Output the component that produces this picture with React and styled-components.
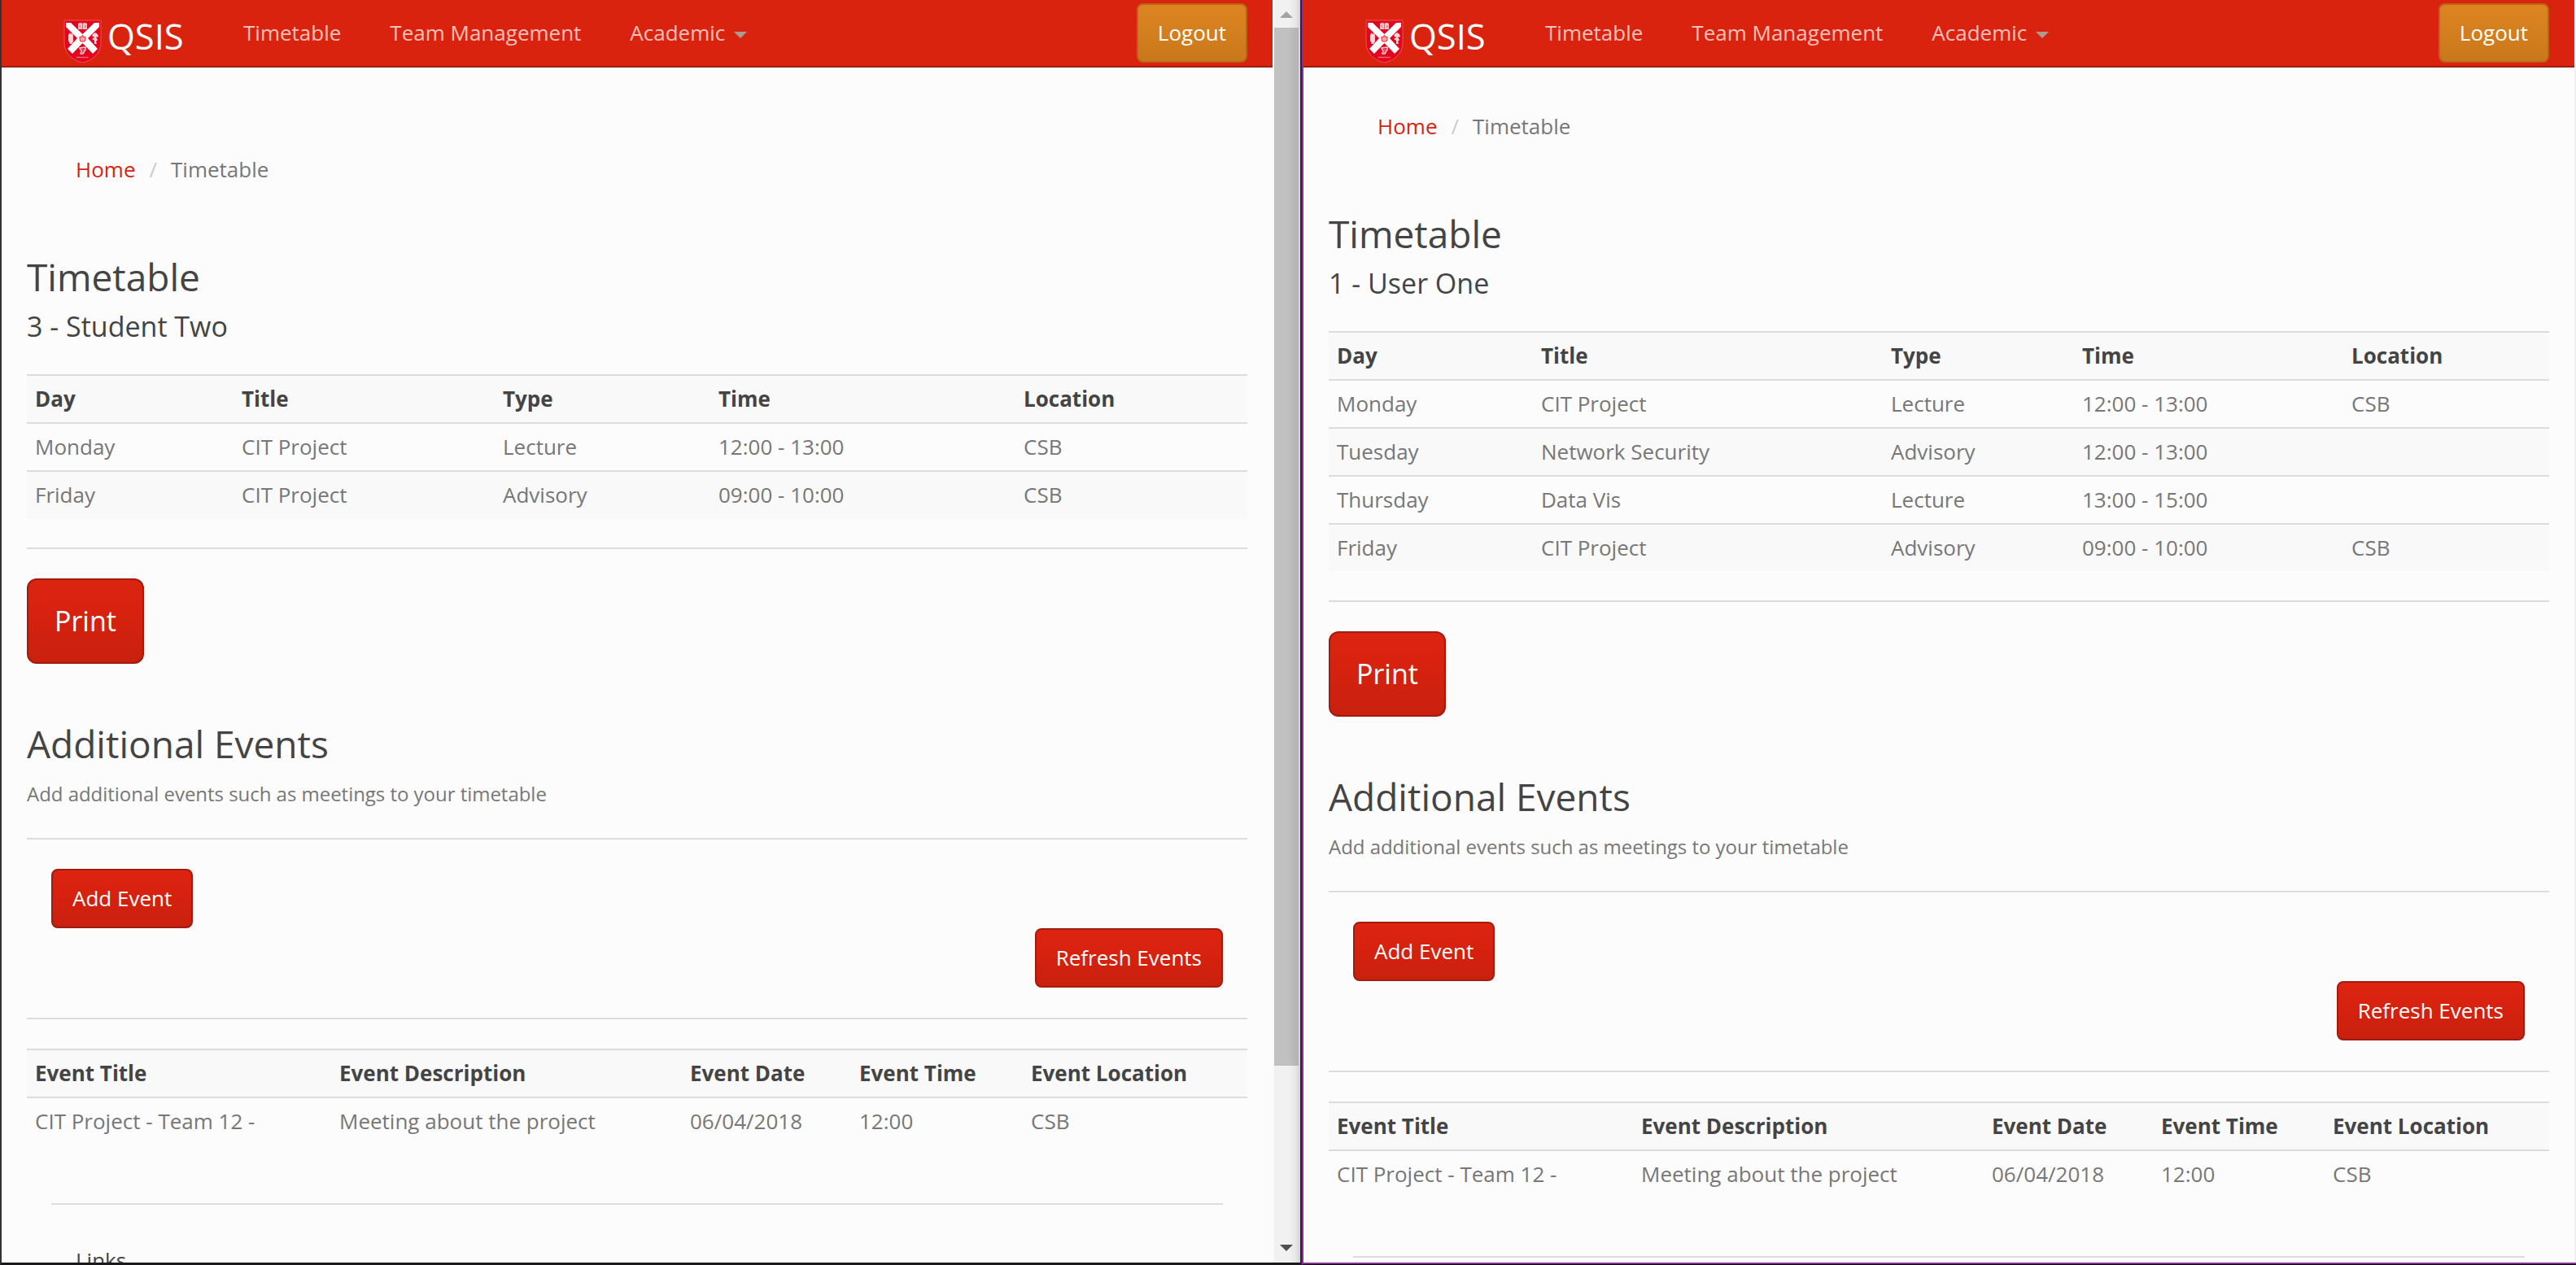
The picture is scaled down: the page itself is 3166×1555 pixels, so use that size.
import React from "react";
import styled, { createGlobalStyle } from "styled-components";

const GlobalStyle = createGlobalStyle`
  * { box-sizing: border-box; }
  body { margin: 0; background: #fcfcfc; overflow: hidden; }
  body, button, table { font-family: "Open Sans", "Noto Sans", sans-serif; font-size: 26px; line-height: 37px; }
`;

const Desktop = styled.div`
  display: flex;
  width: 3166px;
  height: 1555px;
  overflow: hidden;
  color: #777;
`;

const BrowserWindow = styled.section`
  display: flex;
  height: 1555px;
  border-left: 2px solid ${(p) => p.$edge};
  border-bottom: 3px solid #1b191b;
`;

const RightWindow = styled(BrowserWindow)`
  flex-direction: column;
  border-bottom: 1px solid #0a000c;
`;

const WindowBody = styled.div`
  display: flex;
  height: ${(p) => p.$height || "100%"};
`;

const PurpleBase = styled.div`
  height: 2px;
  background: #842f8f;
`;

const Page = styled.div`
  width: 1562px;
  height: 1552px;
  overflow: hidden;
  background: #fcfcfc;
`;

const RightEdge = styled.div`
  width: 2px;
  background: #f0f0f0;
`;

const Navbar = styled.nav`
  display: flex;
  align-items: flex-start;
  height: 83px;
  padding: 4px 31px 0 76px;
  background: #d9230f;
  border-bottom: 2px solid #9e1b0d;
`;

const Brand = styled.div`
  display: flex;
  color: #fff;
  width: 221px;
  font-size: 43.5px;
  line-height: 50px;
  svg { margin: 20px 7px 0 0; flex: none; }
  span { padding-top: 16px; }
`;

const NavLink = styled.a`
  display: flex;
  align-items: center;
  gap: 11px;
  height: 37px;
  margin: 18px 60px 0 0;
  color: #fac0b9;
`;

const Caret = styled.i`
  margin-top: 4px;
  border-top: 8px solid #ab9c92;
  border-left: 8px solid transparent;
  border-right: 8px solid transparent;
`;

const Button = styled.button`
  display: block;
  height: ${(p) => (p.$large ? 105 : 73)}px;
  padding: 0 ${(p) => (p.$large ? 32 : 24)}px;
  border: 2px solid ${(p) => (p.$warning ? "#b9651a" : "#a01b10")};
  border-radius: ${(p) => (p.$large ? 12 : 8)}px;
  background: ${(p) =>
    p.$warning
      ? "linear-gradient(#dc8420, #d5801f 40%, #ca781c)"
      : "linear-gradient(#dc2410, #d7220f 40%, #c9200e)"};
  color: #fff;
  font-size: ${(p) => (p.$large ? 34 : 26)}px;
  white-space: nowrap;
`;

const LogoutButton = styled(Button)`
  margin-left: auto;
`;

const Content = styled.main`
  padding: 0 31px 0 31px;
`;

const Breadcrumb = styled.div`
  display: flex;
  padding: ${(p) => p.$top}px 0 0 60px;
  margin-bottom: 88px;
  a { color: #d9230f; }
  i { font-style: normal; color: #ccc; padding: 0 17px; }
`;

const Heading = styled.h3`
  margin: 0;
  font-size: 46px;
  line-height: 51px;
  font-weight: 400;
  color: #444;
`;

const UserName = styled.h4`
  margin: 16px 0 40px;
  font-size: 34px;
  line-height: 38px;
  font-weight: 400;
  color: #444;
`;

const Note = styled.p`
  margin: 19px 0 37px;
  font-size: 24px;
  line-height: 34px;
  letter-spacing: -0.03px;
`;

const Rule = styled.hr`
  height: 2px;
  margin: ${(p) => p.$before}px ${(p) => p.$inset || 0}px ${(p) => p.$after}px;
  border: 0;
  background: #dcdcdc;
`;

const Table = styled.table`
  width: 100%;
  table-layout: fixed;
  border-spacing: 0;
  border-collapse: separate;
  th, td {
    height: 59px;
    padding: 10px;
    border-top: 2px solid #dcdcdc;
    text-align: left;
    white-space: nowrap;
  }
  th { color: #444; font-weight: 700; }
  tr:nth-child(odd) { background: #f9f9f9; }
`;

const HeadCell = styled.th`
  width: ${(p) => p.$width}px;
`;

const EventActions = styled.div`
  display: flex;
  flex-direction: column;
  align-items: flex-start;
  padding: 0 30px;
  button:last-child { align-self: flex-end; }
`;

const PrintRow = styled.div`
  margin-bottom: 73px;
`;

const LinksTitle = styled.div`
  padding-left: 60px;
  color: #444;
`;

const ScrollTrack = styled.div`
  display: flex;
  flex-direction: column;
  align-items: center;
  width: 34px;
  padding: 14px 2px;
  background: linear-gradient(90deg, #fafafa 0 2px, #f1f1f1 2px 20px, #e8e8e8 28px, #d2d2d2 34px);
`;

const ScrollThumb = styled.div`
  width: 30px;
  height: 1276px;
  margin-top: 12px;
  background: linear-gradient(90deg, #c1c1c1 0 16px, #b3b3b3);
`;

const Arrow = styled.div`
  border-left: 8px solid transparent;
  border-right: 8px solid transparent;
  ${(p) =>
    p.$down
      ? "border-top: 8px solid #505050; margin-top: auto;"
      : "border-bottom: 8px solid #a3a3a3;"}
`;

const Crest = () => (
  <svg width="47" height="54" viewBox="0 0 47 54">
    <path d="M1 1H46V28C46 42 36 50 23.500 53C11 50 1 42 1 28Z" fill="#e3051f" stroke="#ec5247" strokeWidth="1" />
    <path d="M3 4H9L23.500 18L38 4H44V9L30 23L42 36L36 42L23.500 29L11 42L5 36L17 23L3 9Z" fill="#fff" />
    <path d="M18 5Q21 3 23.500 5Q26 3 29 5V12H18Z" fill="#f9bfc0" />
    <path d="M23.500 5V12M20 7V10M27 7V10" stroke="#e6606a" strokeWidth="1" />
    <path d="M6 19L8 16L9 18L11 17L12 20V27L10 30H8L6 26Z" fill="#fbd5d6" />
    <path d="M36 18L39 16L42 18L43 21L40 22L42 25L40 27L41 30H38V26L35 24L38 22L35 20Z" fill="#fbd5d6" />
    <path d="M20 24V21L22 22L23.500 19L25 22L27 21V24L26 27H21Z" fill="#f3a4a8" stroke="#e3303d" strokeWidth="1" />
    <path d="M20 35L27 34V37L24 42H21L22 39Z" fill="none" stroke="#fbd0d1" strokeWidth="1.500" />
    <path d="M23 36V41M25 36V39" stroke="#fbd0d1" strokeWidth=".7" />
    <path d="M16 46.500H31" stroke="#f08a8d" strokeWidth="1.500" strokeDasharray="1.500 .6" />
  </svg>
);

const DataTable = ({ head, rows, widths }) => (
  <Table>
    <tbody>
      <tr>{head.map((h, i) => <HeadCell key={h} $width={widths[i]}>{h}</HeadCell>)}</tr>
      {rows.map((row) => (
        <tr key={row[0]}>{row.map((c, i) => <td key={i}>{c}</td>)}</tr>
      ))}
    </tbody>
  </Table>
);

const TIMETABLE_HEAD = ["Day", "Title", "Type", "Time", "Location"];
const EVENT_HEAD = ["Event Title", "Event Description", "Event Date", "Event Time", "Event Location"];
const EVENT_WIDTHS = [374, 431, 208, 211, 276];
const STUDENT_WIDTHS = [254, 321, 265, 375, 285];
const USER_WIDTHS = [251, 430, 235, 331, 253];
const EVENTS = [["CIT Project - Team 12 -", "Meeting about the project", "06/04/2018", "12:00", "CSB"]];
const STUDENT_ROWS = [
  ["Monday", "CIT Project", "Lecture", "12:00 - 13:00", "CSB"],
  ["Friday", "CIT Project", "Advisory", "09:00 - 10:00", "CSB"],
];
const USER_ROWS = [
  ["Monday", "CIT Project", "Lecture", "12:00 - 13:00", "CSB"],
  ["Tuesday", "Network Security", "Advisory", "12:00 - 13:00", ""],
  ["Thursday", "Data Vis", "Lecture", "13:00 - 15:00", ""],
  ["Friday", "CIT Project", "Advisory", "09:00 - 10:00", "CSB"],
];

const TimetablePage = ({ user, rows, widths, top, links }) => (
  <Page>
    <Navbar>
      <Brand><Crest /><span>QSIS</span></Brand>
      <NavLink>Timetable</NavLink>
      <NavLink>Team Management</NavLink>
      <NavLink>Academic<Caret /></NavLink>
      <LogoutButton $warning>Logout</LogoutButton>
    </Navbar>
    <Content>
      <Breadcrumb $top={top}><a>Home</a><i>/</i><span>Timetable</span></Breadcrumb>
      <Heading>Timetable</Heading>
      <UserName>{user}</UserName>
      <DataTable head={TIMETABLE_HEAD} rows={rows} widths={widths} />
      <Rule $before={36} $after={36} />
      <PrintRow><Button $large>Print</Button></PrintRow>
      <Heading>Additional Events</Heading>
      <Note>Add additional events such as meetings to your timetable</Note>
      <Rule $before={0} $after={36} />
      <EventActions>
        <Button>Add Event</Button>
        <Button>Refresh Events</Button>
      </EventActions>
      <Rule $before={37} $after={36} />
      <DataTable head={EVENT_HEAD} rows={EVENTS} widths={EVENT_WIDTHS} />
      <Rule $before={72} $after={50} $inset={30} />
      {links && <LinksTitle>Links</LinksTitle>}
    </Content>
  </Page>
);

export default function App() {
  return (
    <>
      <GlobalStyle />
      <Desktop>
        <BrowserWindow $edge="#333335">
          <TimetablePage user="3 - Student Two" rows={STUDENT_ROWS} widths={STUDENT_WIDTHS} top={107} links />
          <ScrollTrack><Arrow /><ScrollThumb /><Arrow $down /></ScrollTrack>
        </BrowserWindow>
        <BrowserWindow as="div" $edge="#2e2333" />
        <RightWindow $edge="#842f9b">
          <WindowBody $height="1552px">
            <TimetablePage user="1 - User One" rows={USER_ROWS} widths={USER_WIDTHS} top={54} />
            <RightEdge />
          </WindowBody>
          <PurpleBase />
        </RightWindow>
      </Desktop>
    </>
  );
}
